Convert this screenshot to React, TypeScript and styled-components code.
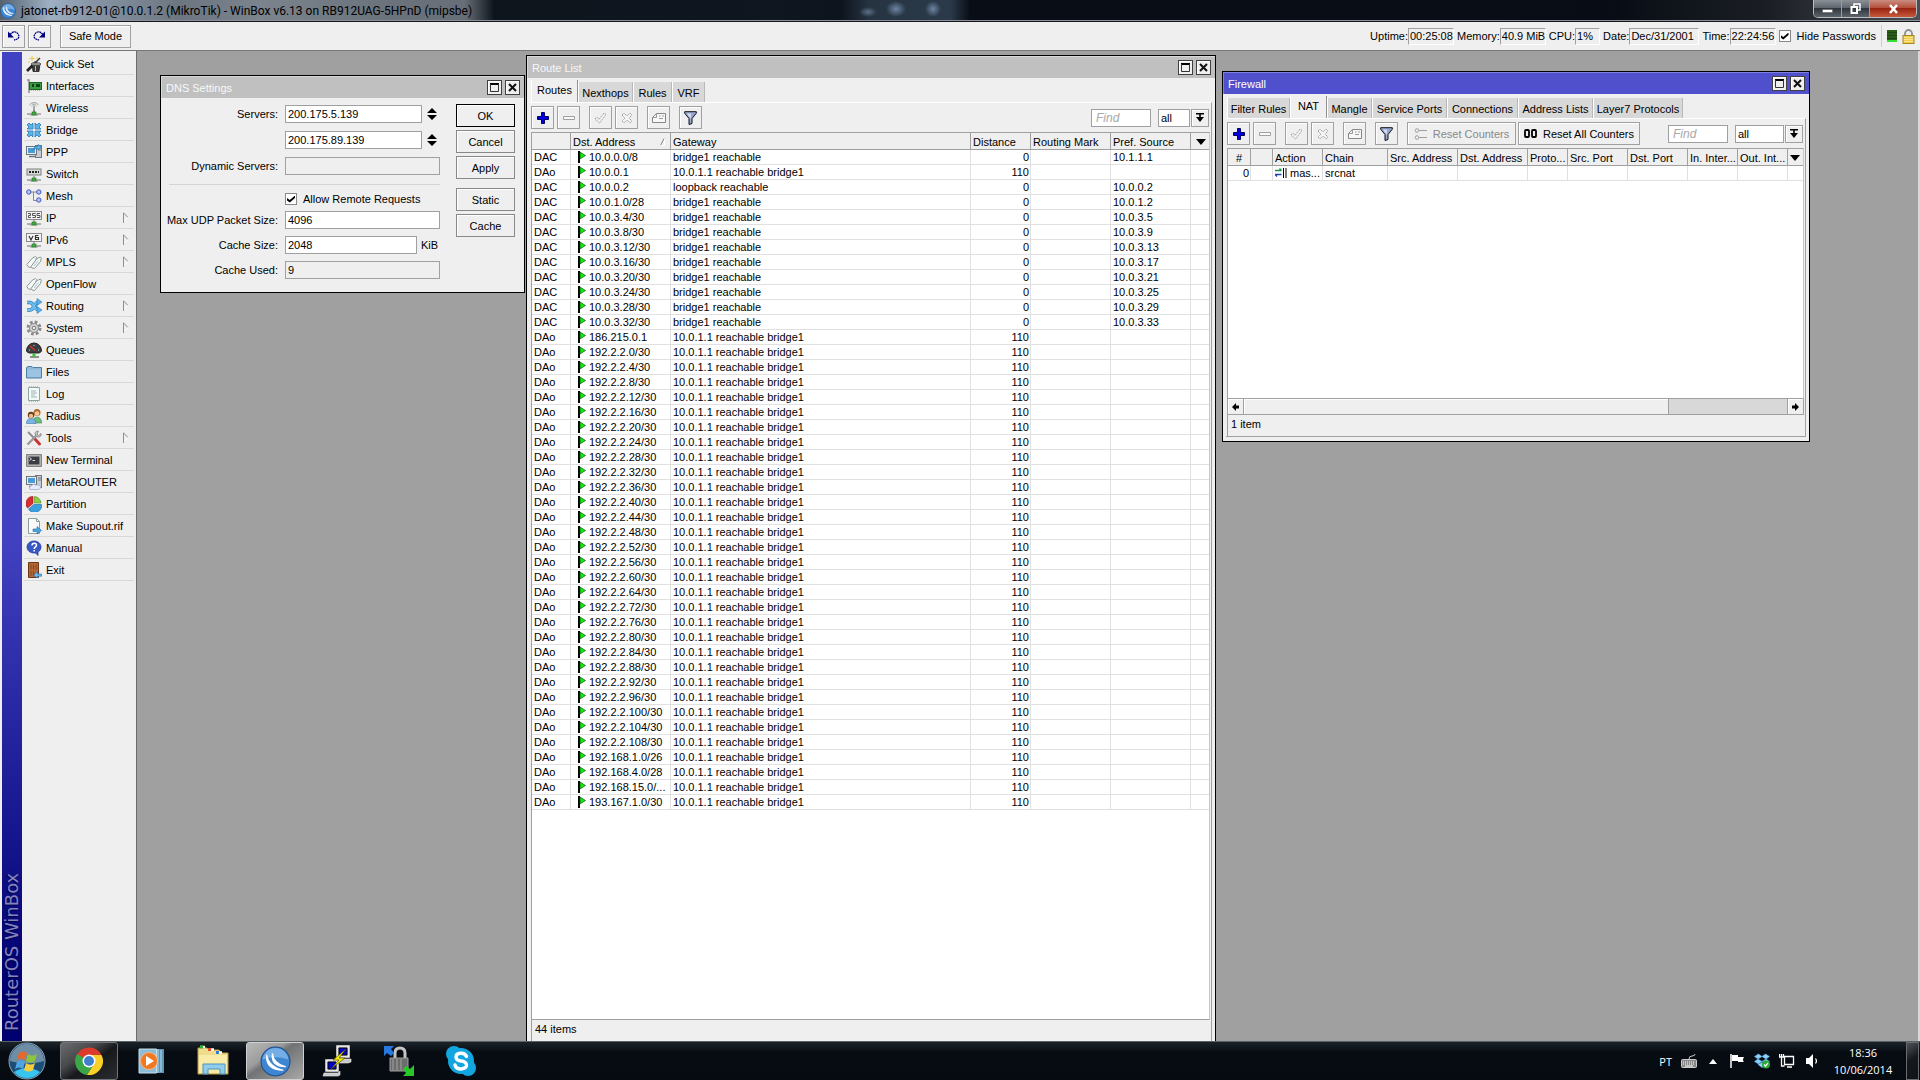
import React from "react";
import styled, { createGlobalStyle, css } from "styled-components";

const GlobalStyle = createGlobalStyle`
  *, *::before, *::after { box-sizing: border-box; }
  body {
    margin: 0;
    overflow: hidden;
    background: #a0a0a0;
    color: #000;
    font-family: "Liberation Sans", Arial, sans-serif;
    font-size: 11px;
    line-height: 14px;
  }
  button, input, select { font: inherit; color: inherit; margin: 0; padding: 0; border-radius: 0; }
  svg { display: block; flex: none; }
`;

/* ---------- shell ---------- */

const Desktop = styled.div`
  display: grid;
  grid-template-rows: 22px 29px minmax(0, 1fr) 39px;
  height: 100vh;
`;

const TitleBar = styled.header`
  display: flex;
  align-items: flex-start;
  border-bottom: 1px solid #14161c;
  box-shadow: inset 0 -1px 0 #8b9098;
  background:
    radial-gradient(ellipse 9px 5px at 868px 12px, #5c7088, transparent),
    radial-gradient(ellipse 10px 8px at 896px 9px, #6d84a4, transparent),
    radial-gradient(ellipse 8px 8px at 933px 9px, #6d84a4, transparent),
    linear-gradient(90deg, transparent 840px, #263442 870px, #2b3a4a 950px, transparent 970px),
    linear-gradient(90deg, #56636f 0, #9fb0c4 50px, #8795a6 90px, #6c7680 180px, #7b838d 260px, #6b737d 380px, #686e77 465px, #0c1219 495px, transparent 496px),
    linear-gradient(90deg, #0c1219 0, #0f161f 780px, #090d15 980px, #080c14 84%, #1a1e24 92%, #4a4f55 100%);
`;

const AppTitle = styled.h1`
  display: flex;
  align-items: center;
  gap: 5px;
  height: 21px;
  margin: 0;
  flex: 1;
  font: 400 12px/20px Roboto, "Noto Sans", sans-serif;
  white-space: nowrap;
`;

const Controls = styled.div`
  display: flex;
  width: 104px;
  height: 18px;
  margin-right: 3px;
  border: 1px solid #b9bdc2;
  border-top: 0;
  border-radius: 0 0 5px 5px;
  overflow: hidden;
`;

const Control = styled.button<{ $close?: boolean }>`
  display: grid;
  place-items: center;
  flex: ${(p) => (p.$close ? "0 0 47px" : "1")};
  border: 0;
  border-left: 1px solid #9a9da2;
  background: ${(p) =>
    p.$close
      ? "linear-gradient(#c98d80, #b5503c 45%, #9a2412 50%, #c85a3c)"
      : "linear-gradient(#8b9096, #60666e 45%, #30363d 50%, #5c636b)"};
  &:first-child { border-left: 0; }
`;

const AppBar = styled.div`
  display: flex;
  align-items: center;
  justify-content: space-between;
  padding: 0 5px 0 2px;
  background: #efefef;
  border-bottom: 1px solid #787878;
`;

const Row = styled.div<{ $gap?: number }>`
  display: flex;
  align-items: center;
  gap: ${(p) => p.$gap ?? 4}px;
`;

const face = css`
  display: flex;
  align-items: center;
  justify-content: center;
  border: 1px solid #a0a0a0;
  background: #efefef;
  box-shadow: inset 1px 1px 0 #fff;
  white-space: nowrap;
`;

const BarButton = styled.button<{ $wide?: boolean }>`
  ${face}
  width: ${(p) => (p.$wide ? 71 : 23)}px;
  height: 23px;
  margin-left: ${(p) => (p.$wide ? 6 : 0)}px;
`;

const Meter = styled.div`
  display: flex;
  align-items: center;
  white-space: nowrap;
`;

const MeterValue = styled.output<{ $w: number }>`
  width: ${(p) => p.$w}px;
  height: 17px;
  margin-right: 3px;
  padding-left: 1px;
  line-height: 15px;
  border: 1px solid #fff;
  border-top-color: #a0a0a0;
  border-left-color: #a0a0a0;
`;

const Check = styled.input`
  appearance: none;
  width: 12px;
  height: 12px;
  border: 1px solid #888;
  background: #fff;
  display: grid;
  place-items: center;
  &:checked::before {
    content: "";
    width: 8px;
    height: 7px;
    background: #000;
    clip-path: polygon(0 35%, 35% 65%, 100% 0, 100% 35%, 35% 100%, 0 70%);
  }
`;

const CheckLabel = styled.label`
  display: flex;
  align-items: center;
  gap: 6px;
  white-space: nowrap;
`;

const Divider = styled.i`
  width: 1px;
  height: 22px;
  background: #cfcfcf;
`;

const Load = styled.i`
  width: 10px;
  height: 12px;
  border-bottom: 2px solid #35e035;
  background: repeating-linear-gradient(#2b5c1c 0 2px, #1e4612 2px 3px);
`;

const Main = styled.main`
  display: grid;
  grid-template-columns: 137px minmax(0, 1fr);
  min-height: 0;
  border-right: 2px solid #d8d8d8;
`;

/* ---------- side menu ---------- */

const Side = styled.aside`
  display: grid;
  grid-template-columns: 20px minmax(0, 1fr);
  padding: 1px 1px 0 2px;
  background: #efefef;
  border-right: 1px solid #6c6c6c;
`;

const Brand = styled.div`
  display: flex;
  align-items: center;
  writing-mode: vertical-rl;
  transform: rotate(180deg);
  padding: 10px 0 0;
  background: linear-gradient(0deg, #4141c3 0, #4040c0 50%, #14148c 80%, #000070 95%);
  color: #8484bc;
  text-shadow: -1px -1px 1px #000048;
  font: 18px/20px "DejaVu Sans", sans-serif;
  white-space: nowrap;
`;

const Menu = styled.nav`
  display: flex;
  flex-direction: column;
  padding: 1px 1px 0 2px;
`;

const MenuItem = styled.button`
  display: flex;
  align-items: center;
  gap: 4px;
  height: 22px;
  padding: 0 4px 0 2px;
  border: 0;
  border-bottom: 1px solid #d8d8d8;
  background: none;
  text-align: left;
  white-space: nowrap;
  span { flex: 1; }
`;

/* ---------- inner windows ---------- */

const Mdi = styled.div`
  position: relative;
  overflow: hidden;
  background: #a0a0a0;
`;

const Window = styled.section<{ $x: number; $y: number; $w: number; $h?: number }>`
  position: absolute;
  left: ${(p) => p.$x}px;
  top: ${(p) => p.$y}px;
  width: ${(p) => p.$w}px;
  display: flex;
  flex-direction: column;
  border: 1px solid #000;
  ${(p) => (p.$h ? `height: ${p.$h}px;` : "bottom: 0; border-bottom-width: 0;")}
  background: #efefef;
`;

const Caption = styled.div<{ $active?: boolean }>`
  display: flex;
  align-items: center;
  gap: 3px;
  height: 22px;
  flex: none;
  padding: 0 4px 0 5px;
  color: ${(p) => (p.$active ? "#fff" : "#f8f8f8")};
  background: ${(p) => (p.$active ? "#5050cc" : "#c0c0c0")};
  box-shadow: inset 1px 1px 0 ${(p) => (p.$active ? "#8080e0" : "#d8d8d8")};
  h2 { flex: 1; margin: 0; padding-top: 2px; font-size: 11px; font-weight: 400; }
`;

const CaptionButton = styled.button`
  ${face}
  width: 15px;
  height: 15px;
  border-color: #404040;
`;

const TabStrip = styled.div`
  display: flex;
  align-items: flex-end;
  height: 24px;
  flex: none;
  padding: 0 4px;
`;

const Tab = styled.button<{ $on?: boolean; $w: number }>`
  width: ${(p) => p.$w}px;
  height: ${(p) => (p.$on ? 22 : 20)}px;
  padding-top: ${(p) => (p.$on ? 0 : 1)}px;
  padding-bottom: ${(p) => (p.$on ? 2 : 0)}px;
  border: 0;
  border-right: 1px solid ${(p) => (p.$on ? "#909090" : "#b8b8b8")};
  border-left: 1px solid #fff;
  background: ${(p) => (p.$on ? "#efefef" : "#d8d8d8")};
  white-space: nowrap;
`;

const Panel = styled.div<{ $open?: boolean }>`
  display: flex;
  flex-direction: column;
  flex: 1;
  min-height: 0;
  margin: 0 3px ${(p) => (p.$open ? 0 : 4)}px 3px;
  padding: 0 1px 0 1px;
  border-top: 1px solid #fff;
  border-right: 1px solid #a0a0a0;
  border-bottom: ${(p) => (p.$open ? "0" : "1px solid #a0a0a0")};
`;

const Tools = styled.div`
  display: flex;
  align-items: center;
  height: 29px;
  flex: none;
`;

const Tool = styled.button<{ $gap?: number; $w?: number }>`
  ${face}
  gap: 6px;
  width: ${(p) => p.$w ?? 23}px;
  height: 23px;
  margin-right: ${(p) => p.$gap ?? 3}px;
  &:disabled { color: #888; }
`;

const Find = styled.input<{ $w: number; $gap: number }>`
  width: ${(p) => p.$w}px;
  height: 18px;
  margin: 0 ${(p) => p.$gap}px 0 auto;
  padding: 0 4px;
  border: 1px solid #a0a0a0;
  background: #fff;
  font-size: 12px;
  &::placeholder { color: #a8a8a8; font-style: italic; opacity: 1; }
`;

const Pick = styled.select<{ $w: number }>`
  appearance: none;
  width: ${(p) => p.$w}px;
  height: 18px;
  padding: 0 2px;
  border: 1px solid #a0a0a0;
  background: #fff;
`;

const DropButton = styled.button`
  ${face}
  width: 18px;
  height: 18px;
  margin-left: 1px;
  margin-right: 1px;
`;

const Sheet = styled.div`
  flex: 1;
  min-height: 0;
  background: #fff;
  border: 1px solid #a0a0a0;
  border-right-color: #c8c8c8;
`;

const Grid = styled.table`
  width: 100%;
  table-layout: fixed;
  border-collapse: separate;
  border-spacing: 0;
  th, td {
    overflow: hidden;
    white-space: nowrap;
    text-align: left;
  }
  th {
    height: 17px;
    padding: 2px 0 0 2px;
    background: #efefef;
    border-right: 1px solid #a0a0a0;
    border-bottom: 1px solid #a0a0a0;
    font-weight: 400;
  }
  td {
    height: 15px;
    padding: 0 0 0 2px;
    border-right: 1px solid #e0e0e0;
    border-bottom: 1px solid #e0e0e0;
  }
  th:last-child, td:last-child { border-right: 0; }
`;

const NumCell = styled.td`
  && { text-align: right; padding-right: 1px; }
`;

const IconCell = styled.div<{ $pad: number; $gap?: number }>`
  display: flex;
  align-items: center;
  gap: ${(p) => p.$gap ?? 3}px;
  padding-left: ${(p) => p.$pad}px;
`;

const SortHead = styled.div`
  display: flex;
  align-items: center;
  justify-content: space-between;
  padding-right: 4px;
`;

const StatusLine = styled.div`
  height: 21px;
  flex: none;
  padding: 2px 3px;
  border-left: 1px solid #a0a0a0;
`;

const ScrollBar = styled.div`
  display: grid;
  grid-template-columns: 16px minmax(0, 425fr) minmax(0, 118fr) 16px;
  height: 16px;
  flex: none;
  border: solid #a0a0a0;
  border-width: 0 1px 1px 1px;
  background: #d8d8d8;
`;

const ScrollPart = styled.button`
  display: grid;
  place-items: center;
  border: 0;
  border-right: 1px solid #a0a0a0;
  background: #efefef;
  box-shadow: inset 1px 1px 0 #fff;
  &:last-child { border-right: 0; border-left: 1px solid #a0a0a0; }
`;

/* ---------- DNS form ---------- */

const DnsBody = styled.form`
  display: flex;
  gap: 16px;
  padding: 7px 8px;
`;

const Fields = styled.div`
  display: flex;
  flex-direction: column;
  width: 271px;
`;

const Field = styled.div<{ $h: number }>`
  display: grid;
  grid-template-columns: 109px 1fr;
  column-gap: 7px;
  align-items: start;
  height: ${(p) => p.$h}px;
`;

const Caption2 = styled.label`
  display: flex;
  justify-content: flex-end;
  line-height: 19px;
  white-space: nowrap;
`;

const TextBox = styled.input<{ $w: number }>`
  width: ${(p) => p.$w}px;
  height: 18px;
  padding: 0 2px;
  border: 1px solid #a0a0a0;
  background: #fff;
  &:read-only { background: #efefef; }
`;

const Rule = styled.hr`
  width: 100%;
  height: 1px;
  margin: 0 0 7px;
  border: 0;
  background: #d4d4d4;
`;

const Spin = styled.button`
  display: grid;
  place-items: center;
  width: 10px;
  height: 18px;
  border: 0;
  background: none;
`;

const Actions = styled.div`
  display: flex;
  flex-direction: column;
  gap: 3px;
  width: 59px;
  margin-top: -1px;
`;

const Action = styled.button<{ $main?: boolean; $apart?: boolean }>`
  ${face}
  height: 23px;
  margin-top: ${(p) => (p.$apart ? 6 : 0)}px;
  border-color: ${(p) => (p.$main ? "#000" : "#888")};
`;

/* ---------- taskbar ---------- */

const TaskBar = styled.footer`
  display: flex;
  align-items: stretch;
  padding: 0 1px 0 7px;
  border-top: 1px solid #5a6268;
  background: linear-gradient(#1b2329, #070c13 10px, #060a11);
  color: #fff;
  font: 11px/17px "Open Sans", "Noto Sans", sans-serif;
`;

const Start = styled.button`
  display: grid;
  place-items: center;
  width: 40px;
  margin-right: 13px;
  border: 0;
  background: none;
`;

const Task = styled.button<{ $state?: "open" | "active" }>`
  display: grid;
  place-items: center;
  width: 58px;
  margin-right: 4px;
  border: 1px solid ${(p) => (p.$state ? (p.$state === "active" ? "#d0d0d0" : "#707478") : "transparent")};
  border-radius: 3px;
  background: ${(p) =>
    p.$state === "active"
      ? "linear-gradient(145deg, #b8b8b8 0, #9c9c9c 35%, #707274 45%, #a8a8a8)"
      : p.$state === "open"
        ? "linear-gradient(145deg, #6a6c6e 0, #46484a 35%, #16181b 55%, #2a2c30)"
        : "none"};
`;

const Tray = styled.div`
  display: flex;
  align-items: center;
  gap: 9px;
  margin-left: auto;
`;

const Clock = styled.time`
  display: block;
  width: 68px;
  text-align: center;
  white-space: pre-line;
`;

const ShowDesktop = styled.button`
  width: 13px;
  align-self: stretch;
  border: 1px solid #686c70;
  background: linear-gradient(145deg, #50545a, #15191e 45%, #101418);
`;

/* ---------- icons ---------- */

type IconProps = { w?: number; h?: number; box?: string; children: React.ReactNode };
const Icon = ({ w = 16, h = 16, box, children }: IconProps) => (
  <svg width={w} height={h} viewBox={box ?? `0 0 ${w} ${h}`} fill="none" aria-hidden="true">
    {children}
  </svg>
);

const NetFoot = () => (
  <>
    <path d="M8 10v3M1 14h14" stroke="#6a716a" />
    <path d="M4 15h8" stroke="#9aa09a" />
    <rect x="6" y="12" width="4" height="3" fill="#3fae3f" stroke="#1f6f1f" strokeWidth=".6" />
  </>
);

const Tag = () => (
  <>
    <path d="M.8 10.500 6.500 4l3-1.500 1 1-.8 3L4.500 13.500l-2-.5z" fill="#f4f8f8" stroke="#8a9a9a" />
    <path d="M5 12.500 11 4.500l3.500-1.500.8 1-.8 3.500L8.500 14.500l-2.500-.5z" fill="#f4f8f8" stroke="#8a9a9a" />
    <path d="m8 12 4.500-5.500" stroke="#a8c4c4" />
  </>
);

const Monitor = () => (
  <>
    <rect x="9.500" y="1.500" width="6" height="12" fill="#c8ccd0" stroke="#70787f" />
    <path d="M12 4h3M12 6h3" stroke="#70787f" />
    <rect x=".5" y="2.500" width="10" height="8" fill="#e8eef2" stroke="#6a747c" />
    <rect x="2" y="4" width="7" height="5" fill="#4a9ad8" />
    <path d="M3 12.500h6" stroke="#6a747c" strokeWidth="1.500" />
  </>
);

const menuIcons: Record<string, React.ReactNode> = {
  "Quick Set": (
    <>
      <path d="m1 15 9-9" stroke="#222" strokeWidth="2.600" />
      <path d="M6 8h8l-1 7.500H7z" fill="#3a3a3a" stroke="#111" strokeWidth=".7" />
      <ellipse cx="10" cy="8" rx="5" ry="1.500" fill="#999" stroke="#333" strokeWidth=".6" />
      <path d="M9.500 10v5" stroke="#bbb" />
      <path d="m9 7 5-5" stroke="#333" strokeWidth="1.500" />
      <path d="M6 0v5M3.500 2.500h5M11 1v2M3 5v2" stroke="#e8c840" />
    </>
  ),
  Interfaces: (
    <>
      <path d="M1 2h2v13" stroke="#8a8f8a" strokeWidth="1.500" />
      <rect x="3.500" y="4.500" width="12" height="7" fill="#3c9a44" stroke="#1e6426" />
      <path d="M6 6h2v3H6zM10 6h4v3h-4z" fill="#12421a" />
      <path d="M5 12.500h9" stroke="#c8b850" strokeDasharray="1 1" />
    </>
  ),
  Wireless: (
    <>
      <path d="M3.500 5a5.500 5.500 0 0 1 9 0M5.500 6a3 3 0 0 1 5 0" stroke="#8f9a98" />
      <path d="M8 6v7" stroke="#8a8f8a" strokeWidth="1.500" />
      <NetFoot />
    </>
  ),
  Bridge: (
    <g fill="#5ab4ea" stroke="#2a7ab4" strokeWidth=".8">
      <path d="m1 3 2-2 2 2 2-2v6H1l2-2z" />
      <path d="m15 3-2-2-2 2-2-2v6h6l-2-2z" />
      <path d="m1 13 2 2 2-2 2 2V9H1l2 2z" />
      <path d="m15 13-2 2-2-2-2 2V9h6l-2 2z" />
    </g>
  ),
  PPP: (
    <>
      <Monitor />
      <path d="M7 6q1-4 5-4V.500L15.500 3 12 6V4.500Q9 4 7 6z" fill="#5ab4ea" stroke="#1f6fae" strokeWidth=".6" />
    </>
  ),
  Switch: (
    <>
      <rect x="1" y="3" width="14" height="6" fill="#d8dcd8" stroke="#7a807a" />
      <path d="M3 6h10" stroke="#222" strokeWidth="2" strokeDasharray="2 1" />
      <NetFoot />
    </>
  ),
  Mesh: (
    <>
      <path d="M5 4h7M7.500 4v8.500H11" stroke="#888" />
      <g fill="#b8c4f4" stroke="#4458c0">
        <circle cx="2.800" cy="4" r="2.200" />
        <circle cx="12.800" cy="4" r="2.200" />
        <circle cx="12.800" cy="12" r="2.200" />
      </g>
    </>
  ),
  IP: (
    <>
      <rect x=".5" y="1.500" width="15" height="8" fill="#f4f4f4" stroke="#8a8a8a" />
      <path d="M2 3.500h2.500v2H2.500v2h2.500M9.500 3.500h-3v2h3v2h-3M14 3.500h-3v2h3v2h-3" stroke="#555" />
      <NetFoot />
    </>
  ),
  IPv6: (
    <>
      <rect x=".5" y="1.500" width="15" height="8" fill="#f4f4f4" stroke="#8a8a8a" />
      <path d="m3 4 2 4 2-4M12.500 3.500H9.500v4h3v-2h-3" stroke="#333" strokeWidth="1.200" />
      <NetFoot />
    </>
  ),
  MPLS: <Tag />,
  OpenFlow: <Tag />,
  Routing: (
    <>
      <path d="M1 4.500h3c4 0 4 7.500 9 7.500" stroke="#2a7fc0" strokeWidth="3.600" />
      <path d="M1 12h3c4 0 4-8 9-8" stroke="#2a7fc0" strokeWidth="3.600" />
      <path d="M1 4.500h3c4 0 4 7.500 8 7.500M1 12h3c4 0 4-8 8-8" stroke="#6cc0f0" strokeWidth="2.200" />
      <path d="m11 .5 5 3.500-5 3.500zM11 8.500l5 3.500-5 3.500z" fill="#5ab0e8" stroke="#2a7fc0" strokeWidth=".6" />
    </>
  ),
  System: (
    <>
      <circle cx="8" cy="8" r="6" stroke="#8c8c8c" strokeWidth="3" strokeDasharray="2.700 2" />
      <circle cx="8" cy="8" r="4.500" fill="#d4d4d4" stroke="#888" />
      <circle cx="8" cy="8" r="1.800" fill="#f0f0f0" stroke="#777" />
    </>
  ),
  Queues: (
    <>
      <path d="M.5 9a7.500 8 0 0 1 15 0q-1 2-3 2h-9q-2 0-3-2z" fill="#3c3e40" stroke="#222" />
      <path d="m4 4 5 4.500" stroke="#e03030" strokeWidth="1.200" />
      <path d="M3 8h1M12 8h1M8 3v1" stroke="#ddd" />
      <path d="M4 15h9" stroke="#333" />
      <rect x="6.500" y="11.500" width="3" height="3.500" fill="#3fbe3f" />
    </>
  ),
  Files: (
    <>
      <path d="M.5 3.500 2 2.500h4l1 1h8.500V14H.500z" fill="#8fb8d8" stroke="#4f7fa4" />
      <path d="M1.500 5.500h13v7.500h-13z" fill="#9cc4e2" />
    </>
  ),
  Log: (
    <>
      <path d="M2.500 1.500h11v13h-11z" fill="#f4faf8" stroke="#8aa8a4" />
      <path d="M3 1h10M3 15h10" stroke="#7a9894" strokeDasharray="1 1" />
      <path d="M5 5h5M5 7h6M5 9h4M5 11h6" stroke="#9cb4b0" />
    </>
  ),
  Radius: (
    <>
      <path d="M7 15q0-6 4-6t5 6z" fill="#6cbc7c" stroke="#3a8a4a" strokeWidth=".6" />
      <circle cx="11" cy="4.500" r="3.500" fill="#b06a2c" />
      <circle cx="11" cy="5.500" r="2.300" fill="#f4c89c" />
      <path d="M.5 15.500q0-5 4.500-5t5 5z" fill="#7ab4e4" stroke="#3a78b0" strokeWidth=".6" />
      <circle cx="5" cy="7" r="3.200" fill="#6a3a18" />
      <circle cx="5" cy="8" r="2.200" fill="#f0bc8c" />
    </>
  ),
  Tools: (
    <>
      <path d="m2 2 6 6" stroke="#8a8a8a" strokeWidth="1.800" />
      <path d="m8.500 8.500 5 5.500" stroke="#cc3434" strokeWidth="3" strokeLinecap="round" />
      <path d="m1.500 14.500 9-9" stroke="#9a9a9a" strokeWidth="2.400" />
      <path d="M15 3.500 12.500 5.500 11 4l1.500-2.700C9.500.5 8.500 3 9.500 5l2 1.800c2.500.7 4.300-1 3.500-3.300z" fill="#ccc" stroke="#777" strokeWidth=".8" />
    </>
  ),
  "New Terminal": (
    <>
      <rect x=".7" y="2.700" width="14.600" height="11.600" fill="#c4c4c4" stroke="#6c6c6c" />
      <rect x="2.500" y="4.500" width="11" height="8" fill="#3a3d42" />
      <path d="m3.500 5.500 2 1.500-2 1.500M6.500 8.500h2.500" stroke="#fff" strokeWidth=".8" />
    </>
  ),
  MetaROUTER: (
    <>
      <Monitor />
      <path d="M4 15.500q-2-2.500 1-3.500 2-3 5-1 4-1 4.500 2 .5 2-2 2.500z" fill="#e8ecfa" stroke="#98a4cc" strokeWidth=".7" />
    </>
  ),
  Partition: (
    <>
      <path d="M7 7.500V.500A7 7 0 0 0 1.500 12z" fill="#d82c34" stroke="#981820" strokeWidth=".6" />
      <path d="M8.500 7V.500A7 7 0 0 1 15 7z" fill="#8cd048" stroke="#4c9018" strokeWidth=".6" />
      <path d="M8 8.500h7.500A7 7 0 0 1 2.500 13z" fill="#3aa0e0" stroke="#1868a0" strokeWidth=".6" />
    </>
  ),
  "Make Supout.rif": (
    <>
      <path d="M2.500.5h8l3 3v12h-11z" fill="#fafcfc" stroke="#8a9c9c" />
      <path d="M10.500.5v3h3" stroke="#8a9c9c" />
      <path d="M7 11h4V8.500l4.500 4L11 16v-2.500H7z" fill="#4ca4e0" stroke="#1c6cac" strokeWidth=".6" />
    </>
  ),
  Manual: (
    <>
      <path d="M8 1c4 0 7 2.600 7 6 0 2-1 4-3 5v3.500L9.500 13H8c-4 0-7-2.600-7-6s3-6 7-6z" fill="#3858c8" stroke="#1c3490" strokeWidth=".7" />
      <path d="M6 5.500c0-3 4.500-3 4.500-.3C10.500 7 8.200 6.800 8.200 9M8.200 10v1.600" stroke="#fff" strokeWidth="1.500" />
    </>
  ),
  Exit: (
    <>
      <path d="M2.500.5h10v15h-10z" fill="#b4683a" stroke="#6a3814" />
      <path d="M5 2.500v5M7.500 2.500v5M10 2.500v5M5 9v5M7.500 9v5" stroke="#84461e" />
      <path d="M15.500 12h-4v-2.500l-4 3.700 4 3v-2h4z" fill="#6cb8e8" stroke="#1c6cac" strokeWidth=".6" />
    </>
  ),
};

const WinBoxLogo = ({ size }: { size: number }) => (
  <Icon w={size} h={size} box="0 0 30 30">
    <circle cx="15" cy="15" r="14" fill="#3f86d0" stroke="#1c4c8c" strokeWidth="1" />
    <path d="M2.500 13A12.600 12.600 0 0 1 27.500 13Q15 9 2.500 13z" fill="#74aee6" />
    <path d="M6.500 8.500Q8.500 20 22.500 23.500 5 23.500 6.500 8.500z" fill="#fff" stroke="#fff" />
    <path d="M12 7Q13 17 25 20 10 20 12 7z" fill="#fff" stroke="#fff" />
  </Icon>
);

const Flag = () => (
  <Icon w={8} h={12}>
    <path d="M1 0v12" stroke="#000" strokeWidth="2" />
    <path d="M2 1 7.500 4.500 2 8z" fill="#10e810" stroke="#064006" strokeWidth=".6" />
  </Icon>
);

const Submenu = () => (
  <Icon w={8} h={12}>
    <path d="M1.500 11V.800L6 5.500" stroke="#909090" />
    <path d="M6 5.500 2.500 9" stroke="#fff" />
  </Icon>
);

const Undo = ({ flip }: { flip?: boolean }) => (
  <Icon w={13} h={12}>
    <g transform={flip ? "translate(13 0) scale(-1 1)" : undefined}>
      <path d="M3 4.500Q8-.5 11 4t-4 6" stroke="#000080" strokeWidth="1.300" strokeDasharray="2 .5" />
      <path d="M1 1.500v6h6z" fill="#000080" />
    </g>
  </Icon>
);

const MaxIcon = () => (
  <Icon w={9} h={9}>
    <path d="M0 1h9" stroke="#000" strokeWidth="2" />
    <path d="M.5 1v7.500h8V1" stroke="#333" />
  </Icon>
);

const CloseIcon = () => (
  <Icon w={9} h={9}>
    <path d="m1 1 7 7M8 1 1 8" stroke="#111" strokeWidth="2" />
  </Icon>
);

const Plus = () => (
  <Icon w={12} h={12}>
    <path d="M4.500.5h3v4h4v3h-4v4h-3v-4h-4v-3h4z" fill="#0000e0" stroke="#000060" />
  </Icon>
);

const Minus = () => (
  <Icon w={12} h={12}>
    <path d="M.5 4.500h11v3H.500z" fill="#f8f8f8" stroke="#a0a0a0" />
  </Icon>
);

const Tick = () => (
  <Icon w={13} h={12}>
    <path d="m1 7 2-2 2 2.500L10 1l2 1.500L5.500 11z" fill="#f4f4f4" stroke="#a0a0a0" strokeDasharray="1.500 .7" />
  </Icon>
);

const Cross = () => (
  <Icon w={12} h={12}>
    <path d="m1 3 2-2 3 3 3-3 2 2-3 3 3 3-2 2-3-3-3 3-2-2 3-3z" fill="#f4f4f4" stroke="#a0a0a0" strokeDasharray="1.500 .7" />
  </Icon>
);

const Note = () => (
  <Icon w={14} h={12}>
    <path d="M4.500 1.500h9v9H.500v-5z" fill="#f8f8f8" stroke="#888" />
    <path d="M4.500 1.500v4h-4M7 4h1.500M10 4h2M7 6.500h4" stroke="#999" />
  </Icon>
);

const Funnel = () => (
  <Icon w={13} h={14}>
    <path d="M.7.7h11.600v1.500L8 7.500v5l-3 1v-6L.700 2.200z" fill="#98a8d0" stroke="#101018" />
    <path d="M3 2.500h4l-.7 8V7z" fill="#d8e0f4" />
  </Icon>
);

const Drop = () => (
  <Icon w={8} h={9}>
    <path d="M0 .8h8M4 1v4" stroke="#000" strokeWidth="1.600" />
    <path d="M0 4h8L4 9z" fill="#000" />
  </Icon>
);

const Down = () => (
  <Icon w={10} h={6}>
    <path d="M0 0h10L5 6z" fill="#000" />
  </Icon>
);

const UpDown = () => (
  <Icon w={10} h={12}>
    <path d="M5 0 0 5h10zM5 12 0 7h10z" fill="#000" />
  </Icon>
);

const Arrow = ({ flip }: { flip?: boolean }) => (
  <Icon w={7} h={8}>
    <path transform={flip ? "translate(7 0) scale(-1 1)" : undefined} d="M0 4 4 0v2.500h3v3H4V8z" fill="#000" />
  </Icon>
);

const Padlock = () => (
  <Icon w={13} h={15}>
    <path d="M3 7V4.500a3.500 3.500 0 0 1 7 0V7" stroke="#909090" strokeWidth="1.800" />
    <rect x="1" y="6.500" width="11" height="8" fill="#f0cc48" stroke="#a88820" />
    <path d="M2 8.500h9M2 10.500h9M2 12.500h9" stroke="#f8e48c" />
  </Icon>
);

/* ---------- data ---------- */

const submenus = ["IP", "IPv6", "MPLS", "Routing", "System", "Tools"];

const connected: [string, string][] = [
  ["10.0.1.0/28", "10.0.1.2"],
  ["10.0.3.4/30", "10.0.3.5"],
  ["10.0.3.8/30", "10.0.3.9"],
  ["10.0.3.12/30", "10.0.3.13"],
  ["10.0.3.16/30", "10.0.3.17"],
  ["10.0.3.20/30", "10.0.3.21"],
  ["10.0.3.24/30", "10.0.3.25"],
  ["10.0.3.28/30", "10.0.3.29"],
  ["10.0.3.32/30", "10.0.3.33"],
];

const ospfNets = [
  "186.215.0.1",
  ...[0, 4, 8, 12, 16, 20, 24, 28, 32, 36, 40, 44, 48, 52, 56, 60, 64, 72, 76, 80, 84, 88, 92, 96, 100, 104, 108].map(
    (n) => `192.2.2.${n}/30`,
  ),
  "192.168.1.0/26",
  "192.168.4.0/28",
  "192.168.15.0/...",
  "193.167.1.0/30",
];

type Route = { flags: string; dst: string; gw: string; dist: number; src: string };
const viaBridge = "10.0.1.1 reachable bridge1";

const routes: Route[] = [
  { flags: "DAC", dst: "10.0.0.0/8", gw: "bridge1 reachable", dist: 0, src: "10.1.1.1" },
  { flags: "DAo", dst: "10.0.0.1", gw: viaBridge, dist: 110, src: "" },
  { flags: "DAC", dst: "10.0.0.2", gw: "loopback reachable", dist: 0, src: "10.0.0.2" },
  ...connected.map(([dst, src]) => ({ flags: "DAC", dst, gw: "bridge1 reachable", dist: 0, src })),
  ...ospfNets.map((dst) => ({ flags: "DAo", dst, gw: viaBridge, dist: 110, src: "" })),
];

const meters: [string, string, number][] = [
  ["Uptime", "00:25:08", 46],
  ["Memory", "40.9 MiB", 46],
  ["CPU", "1%", 25],
  ["Date", "Dec/31/2001", 70],
  ["Time", "22:24:56", 46],
];

const natColumns: [string, number][] = [
  ["#", 23],
  ["", 22],
  ["Action", 50],
  ["Chain", 65],
  ["Src. Address", 70],
  ["Dst. Address", 70],
  ["Proto...", 40],
  ["Src. Port", 60],
  ["Dst. Port", 60],
  ["In. Inter...", 50],
  ["Out. Int...", 50],
];

/* ---------- parts ---------- */

const WindowCaption = ({ title, active }: { title: string; active?: boolean }) => (
  <Caption $active={active}>
    <h2>{title}</h2>
    <CaptionButton aria-label="Maximize"><MaxIcon /></CaptionButton>
    <CaptionButton aria-label="Close"><CloseIcon /></CaptionButton>
  </Caption>
);

const Tabs = ({ items, on }: { items: [string, number][]; on: string }) => (
  <TabStrip role="tablist">
    {items.map(([name, w]) => (
      <Tab key={name} role="tab" aria-selected={name === on} $on={name === on} $w={w}>{name}</Tab>
    ))}
  </TabStrip>
);

const ListTools = ({ children, gaps, find, pick }: { children?: React.ReactNode; gaps: [number, number]; find: [number, number]; pick: number }) => (
  <Tools>
    <Tool aria-label="Add"><Plus /></Tool>
    <Tool aria-label="Remove" disabled $gap={gaps[0]}><Minus /></Tool>
    <Tool aria-label="Enable" disabled><Tick /></Tool>
    <Tool aria-label="Disable" disabled $gap={gaps[0]}><Cross /></Tool>
    <Tool aria-label="Comment" disabled $gap={gaps[0]}><Note /></Tool>
    <Tool aria-label="Filter" $gap={gaps[1]}><Funnel /></Tool>
    {children}
    <Find aria-label="Find" placeholder="Find" $w={find[0]} $gap={find[1]} />
    <Pick aria-label="Show" $w={pick}><option>all</option></Pick>
    <DropButton aria-label="Open list"><Drop /></DropButton>
  </Tools>
);

const RouteWindow = () => (
  <Window $x={389} $y={4} $w={690}>
    <WindowCaption title="Route List" />
    <Tabs items={[["Routes", 47], ["Nexthops", 55], ["Rules", 39], ["VRF", 33]]} on="Routes" />
    <Panel $open>
      <ListTools gaps={[9, 8]} find={[60, 7]} pick={32} />
      <Sheet>
        <Grid>
          <colgroup>
            <col width={39} /><col width={100} /><col /><col width={60} /><col width={80} /><col width={80} /><col width={18} />
          </colgroup>
          <thead>
            <tr>
              <th />
              <th>
                <SortHead>
                  Dst. Address
                  <Icon w={6} h={8}><path d="M.5 7.500 4 .5" stroke="#888" /><path d="M4.500 1v6.500H.500" stroke="#fff" /></Icon>
                </SortHead>
              </th>
              <th>Gateway</th>
              <th>Distance</th>
              <th>Routing Mark</th>
              <th>Pref. Source</th>
              <th aria-label="Columns"><IconCell $pad={3}><Down /></IconCell></th>
            </tr>
          </thead>
          <tbody>
            {routes.map((r) => (
              <tr key={r.dst}>
                <td>{r.flags}</td>
                <td><IconCell $pad={5}><Flag /><span>{r.dst}</span></IconCell></td>
                <td>{r.gw}</td>
                <NumCell>{r.dist}</NumCell>
                <td />
                <td>{r.src}</td>
                <td />
              </tr>
            ))}
          </tbody>
        </Grid>
      </Sheet>
      <StatusLine>44 items</StatusLine>
    </Panel>
  </Window>
);

const FirewallWindow = () => (
  <Window $x={1085} $y={20} $w={588} $h={371}>
    <WindowCaption title="Firewall" active />
    <Tabs
      on="NAT"
      items={[["Filter Rules", 63], ["NAT", 37], ["Mangle", 45], ["Service Ports", 75], ["Connections", 71], ["Address Lists", 75], ["Layer7 Protocols", 90]]}
    />
    <Panel>
      <ListTools gaps={[9, 9]} find={[60, 7]} pick={49}>
        <Tool disabled $w={109} $gap={2}>
          <Icon w={13} h={12}><path d="M5 2.500h8M5 9.500h8" stroke="#a0a0a0" /><circle cx="3" cy="2.500" r="1.800" stroke="#a0a0a0" /><circle cx="3" cy="9.500" r="1.800" stroke="#a0a0a0" /></Icon>
          Reset Counters
        </Tool>
        <Tool $w={122}>
          <Icon w={13} h={9}><rect x="1" y="1" width="4" height="7" rx="1" stroke="#000" strokeWidth="1.800" /><rect x="8" y="1" width="4" height="7" rx="1" stroke="#000" strokeWidth="1.800" /></Icon>
          Reset All Counters
        </Tool>
      </ListTools>
      <Sheet>
        <Grid>
          <colgroup>
            {natColumns.map(([name, w]) => <col key={name} width={w} />)}
            <col />
          </colgroup>
          <thead>
            <tr>
              {natColumns.map(([name], i) => <th key={name}>{i === 0 ? <IconCell $pad={6}>{name}</IconCell> : name}</th>)}
              <th aria-label="Columns"><IconCell $pad={0}><Down /></IconCell></th>
            </tr>
          </thead>
          <tbody>
            <tr>
              <NumCell>0</NumCell>
              <td />
              <td>
                <IconCell $pad={0} $gap={3}>
                  <Icon w={12} h={10}>
                    <path d="M0 2.500h6.500M4.500.500l2 2" stroke="#189048" strokeWidth="1.300" /><path d="M0 6.500h6.500M0 6.500l2 2" stroke="#2040c0" strokeWidth="1.300" /><path d="M8.500 0v10M11 0v10" stroke="#000" />
                  </Icon>
                  <span>mas...</span>
                </IconCell>
              </td>
              <td>srcnat</td>
              {natColumns.slice(4).map(([name]) => <td key={name} />)}
              <td />
            </tr>
          </tbody>
        </Grid>
      </Sheet>
      <ScrollBar>
        <ScrollPart aria-label="Scroll left"><Arrow /></ScrollPart>
        <ScrollPart aria-label="Scroll thumb" />
        <span />
        <ScrollPart aria-label="Scroll right"><Arrow flip /></ScrollPart>
      </ScrollBar>
      <StatusLine>1 item</StatusLine>
    </Panel>
  </Window>
);

const DnsWindow = () => (
  <Window $x={23} $y={24} $w={365} $h={218}>
    <WindowCaption title="DNS Settings" />
    <DnsBody onSubmit={(e) => e.preventDefault()}>
      <Fields>
        <Field $h={26}>
          <Caption2 htmlFor="dns1">Servers:</Caption2>
          <Row $gap={5}><TextBox id="dns1" $w={137} defaultValue="200.175.5.139" /><Spin type="button" aria-label="Add or remove first server"><UpDown /></Spin></Row>
        </Field>
        <Field $h={26}>
          <span />
          <Row $gap={5}><TextBox aria-label="Second server" $w={137} defaultValue="200.175.89.139" /><Spin type="button" aria-label="Add or remove second server"><UpDown /></Spin></Row>
        </Field>
        <Field $h={27}>
          <Caption2 htmlFor="dyn">Dynamic Servers:</Caption2>
          <TextBox id="dyn" $w={155} readOnly />
        </Field>
        <Rule />
        <Field $h={19}>
          <span />
          <CheckLabel><Check type="checkbox" defaultChecked />Allow Remote Requests</CheckLabel>
        </Field>
        <Field $h={25}>
          <Caption2 htmlFor="udp">Max UDP Packet Size:</Caption2>
          <TextBox id="udp" $w={155} defaultValue="4096" />
        </Field>
        <Field $h={25}>
          <Caption2 htmlFor="cache">Cache Size:</Caption2>
          <Row><TextBox id="cache" $w={132} defaultValue="2048" />KiB</Row>
        </Field>
        <Field $h={18}>
          <Caption2 htmlFor="used">Cache Used:</Caption2>
          <TextBox id="used" $w={155} readOnly value="9" />
        </Field>
      </Fields>
      <Actions>
        <Action type="submit" $main>OK</Action>
        <Action type="button">Cancel</Action>
        <Action type="button">Apply</Action>
        <Action type="button" $apart>Static</Action>
        <Action type="button">Cache</Action>
      </Actions>
    </DnsBody>
  </Window>
);

const Taskbar = () => (
  <TaskBar>
    <Start aria-label="Start">
      <Icon w={38} h={38}>
        <circle cx="19" cy="19" r="18" fill="#1c4f78" stroke="#8fa8b8" />
        <path d="M2 19a17 17 0 0 1 34 0Q19 24 2 19z" fill="#6f8ea6" />
        <path d="M6 30q13-8 26 0-5 6-13 6t-13-6z" fill="#38c4ee" />
        <path d="M11 11q4-3 8 0l-2 7q-4-3-8 0z" fill="#e8682c" />
        <path d="M20 12q4 3 9 0l-2 7q-4 3-9 0z" fill="#8cc43c" />
        <path d="M9 20q4-3 8 0l-2 7q-4-3-8 0z" fill="#4fa4e4" />
        <path d="M18 21q4 3 9 0l-2 7q-4 3-9 0z" fill="#f8cc3c" />
      </Icon>
    </Start>
    <Task $state="open" aria-label="Chrome">
      <Icon w={28} h={28}>
        <path d="M14 14 2 7.500A14 14 0 0 1 26.500 8H14z" fill="#dc3a2c" />
        <path d="M14 14 2 7A14 14 0 0 0 12 28l7-11z" fill="#3aa648" />
        <path d="M14 8h12.500A14 14 0 0 1 12 28l7-11z" fill="#f8d028" />
        <circle cx="14" cy="14" r="6.500" fill="#fff" />
        <circle cx="14" cy="14" r="5" fill="#3f7fd0" />
      </Icon>
    </Task>
    <Task aria-label="Media Player">
      <Icon w={26} h={26}>
        <path d="M16 1h10v24H16z" fill="#5a94b8" />
        <path d="M23 2v22M20 1v24" stroke="#b8dcec" />
        <path d="M1 1h17.500v24H1z" fill="#8cbcd8" stroke="#c4e0ec" />
        <circle cx="11" cy="13" r="8.500" fill="#f07820" stroke="#f8b888" />
        <path d="m8 8 8 5-8 5z" fill="#fff" />
      </Icon>
    </Task>
    <Task aria-label="Explorer">
      <Icon w={34} h={32}>
        <path d="M2 3h9l2 2h10l2 3h7v21H2z" fill="#f0dc8c" stroke="#b89c4c" />
        <path d="M4 2h5M12 4.500h6M20 7.500h6" stroke="#fff" strokeWidth="2.500" />
        <path d="M4 2h3" stroke="#30b030" strokeWidth="3" /><path d="M12 4.500h3" stroke="#e05028" strokeWidth="3" /><path d="M20 7.500h3" stroke="#3880d0" strokeWidth="3" />
        <path d="M3 10h28v18H3z" fill="#f8eca8" />
        <path d="M7 29V19h22v10h-5v-5H12v5z" fill="#90ccec" stroke="#4c94bc" />
      </Icon>
    </Task>
    <Task $state="active" aria-label="WinBox"><WinBoxLogo size={31} /></Task>
    <Task aria-label="PuTTY">
      <Icon w={30} h={32}>
        <path d="M15 1h12v11H15zM4 15h12v11H4z" fill="#ccc" stroke="#eee" strokeWidth="1.500" />
        <path d="M17 3h8v7h-8zM6 17h8v7H6z" fill="#0000d0" stroke="#000" />
        <path d="M15 14h14v3l-3 1H15zM2 28h14l2-2v4l-2 1H1z" fill="#c8c8c8" stroke="#eee" strokeWidth=".6" />
        <path d="m24 4-13 11h6l-8 9 14-11h-6z" fill="#f8f000" stroke="#504800" strokeWidth=".7" />
      </Icon>
    </Task>
    <Task aria-label="Secure transfer">
      <Icon w={32} h={32}>
        <path d="M12 14V8q0-5 5-5t5 5v6" stroke="#c4c4c4" strokeWidth="3" />
        <path d="M7 13h18v13H7z" fill="#6c6c6c" stroke="#a0a0a0" />
        <path d="M10 14v12M14 14v12M18 14v12" stroke="#909090" strokeWidth="1.500" />
        <path d="M1 1h10L8 4l3 4-3 3-4-3-3 3z" fill="#2878e0" />
        <path d="M31 31H20l3-3-3-4 3-3 4 3 4-4z" fill="#28c828" />
      </Icon>
    </Task>
    <Task aria-label="Skype">
      <Icon w={32} h={32}>
        <circle cx="16" cy="16" r="13" fill="#12a5e0" /><circle cx="9" cy="9" r="8" fill="#12a5e0" /><circle cx="23" cy="23" r="8" fill="#12a5e0" />
        <path d="M21.500 11.500Q20 8 15.500 8.300 11 8.600 11 12t5 4 5.500 4-5.500 4q-5 0-6-4" stroke="#fff" strokeWidth="3.400" strokeLinecap="round" />
      </Icon>
    </Task>
    <Tray>
      <span>PT</span>
      <Icon w={16} h={16}>
        <path d="M8 6q0-3 3-3t3-2" stroke="#ccc" />
        <rect x=".5" y="6.500" width="15" height="8" rx="1" fill="#888" stroke="#ccc" />
        <path d="M2 9h12M2 11h12" stroke="#fff" strokeDasharray="1 1" /><path d="M4 13h8" stroke="#fff" />
      </Icon>
      <Icon w={14} h={8}><path d="m3 7 4-5 4 5z" fill="#fff" /></Icon>
      <Icon w={16} h={16}>
        <path d="M2 1v14" stroke="#fff" strokeWidth="1.500" /><path d="M3 2h6v6H3zM9 4h6q-2 3 0 5H9z" fill="#fff" />
      </Icon>
      <Icon w={16} h={16}>
        <path d="M4.500 1 8 3.500 4 6 .5 3.500zM11.500 1l4 2.500L12 6 8 3.500zM4 6l4 2.500L4.500 11 .5 8.500zM12 6l3.500 2.500-4 2.500L8 8.500zM4 11.500l4-2 4 2-4 3z" fill="#8cd0f8" stroke="#5cb0ec" strokeWidth=".6" />
        <circle cx="12" cy="11.500" r="4" fill="#2ca838" /><path d="m10 11.500 1.500 1.700 2.500-3.400" stroke="#fff" strokeWidth="1.200" />
      </Icon>
      <Icon w={16} h={16}>
        <path d="M5.500 3.500h9v8h-9zM8 14h5M2.500 1v4M.500 1v3h4V1M2.500 5v8h3" stroke="#fff" strokeWidth="1.300" />
      </Icon>
      <Icon w={16} h={16}>
        <path d="M2 5h3l4-4v14l-4-4H2z" fill="#fff" /><path d="M11.500 5.500q2 2.500 0 5" stroke="#fff" strokeWidth="1.200" />
      </Icon>
      <Clock>{"18:36\n10/06/2014"}</Clock>
      <ShowDesktop aria-label="Show desktop" />
    </Tray>
  </TaskBar>
);

export default function App() {
  return (
    <Desktop>
      <GlobalStyle />
      <TitleBar>
        <AppTitle>
          <WinBoxLogo size={16} />
          jatonet-rb912-01@10.0.1.2 (MikroTik) - WinBox v6.13 on RB912UAG-5HPnD (mipsbe)
        </AppTitle>
        <Controls>
          <Control aria-label="Minimize"><Icon w={11} h={8}><path d="M.5 4.500h10v3H.500z" fill="#fff" stroke="#555" strokeWidth=".5" /></Icon></Control>
          <Control aria-label="Restore"><Icon w={11} h={11}><path d="M4 4V1h6v6H7" stroke="#fff" strokeWidth="1.500" /><path d="M1.500 4h5.500v6H1.500z" stroke="#fff" strokeWidth="2" /></Icon></Control>
          <Control aria-label="Close" $close><Icon w={11} h={10}><path d="m2 1 7 8M9 1 2 9" stroke="#fff" strokeWidth="2.600" /></Icon></Control>
        </Controls>
      </TitleBar>
      <AppBar>
        <Row $gap={3}>
          <BarButton aria-label="Undo"><Undo /></BarButton>
          <BarButton aria-label="Redo"><Undo flip /></BarButton>
          <BarButton $wide>Safe Mode</BarButton>
        </Row>
        <Row $gap={0}>
          {meters.map(([name, value, w]) => (
            <Meter key={name}>{name}:<MeterValue $w={w}>{value}</MeterValue></Meter>
          ))}
          <Row $gap={5}>
            <CheckLabel><Check type="checkbox" defaultChecked />Hide Passwords</CheckLabel>
            <Divider />
            <Load />
            <Padlock />
          </Row>
        </Row>
      </AppBar>
      <Main>
        <Side>
          <Brand>RouterOS WinBox</Brand>
          <Menu>
            {Object.entries(menuIcons).map(([name, art]) => (
              <MenuItem key={name}>
                <Icon>{art}</Icon>
                <span>{name}</span>
                {submenus.includes(name) && <Submenu />}
              </MenuItem>
            ))}
          </Menu>
        </Side>
        <Mdi>
          <DnsWindow />
          <RouteWindow />
          <FirewallWindow />
        </Mdi>
      </Main>
      <Taskbar />
    </Desktop>
  );
}
